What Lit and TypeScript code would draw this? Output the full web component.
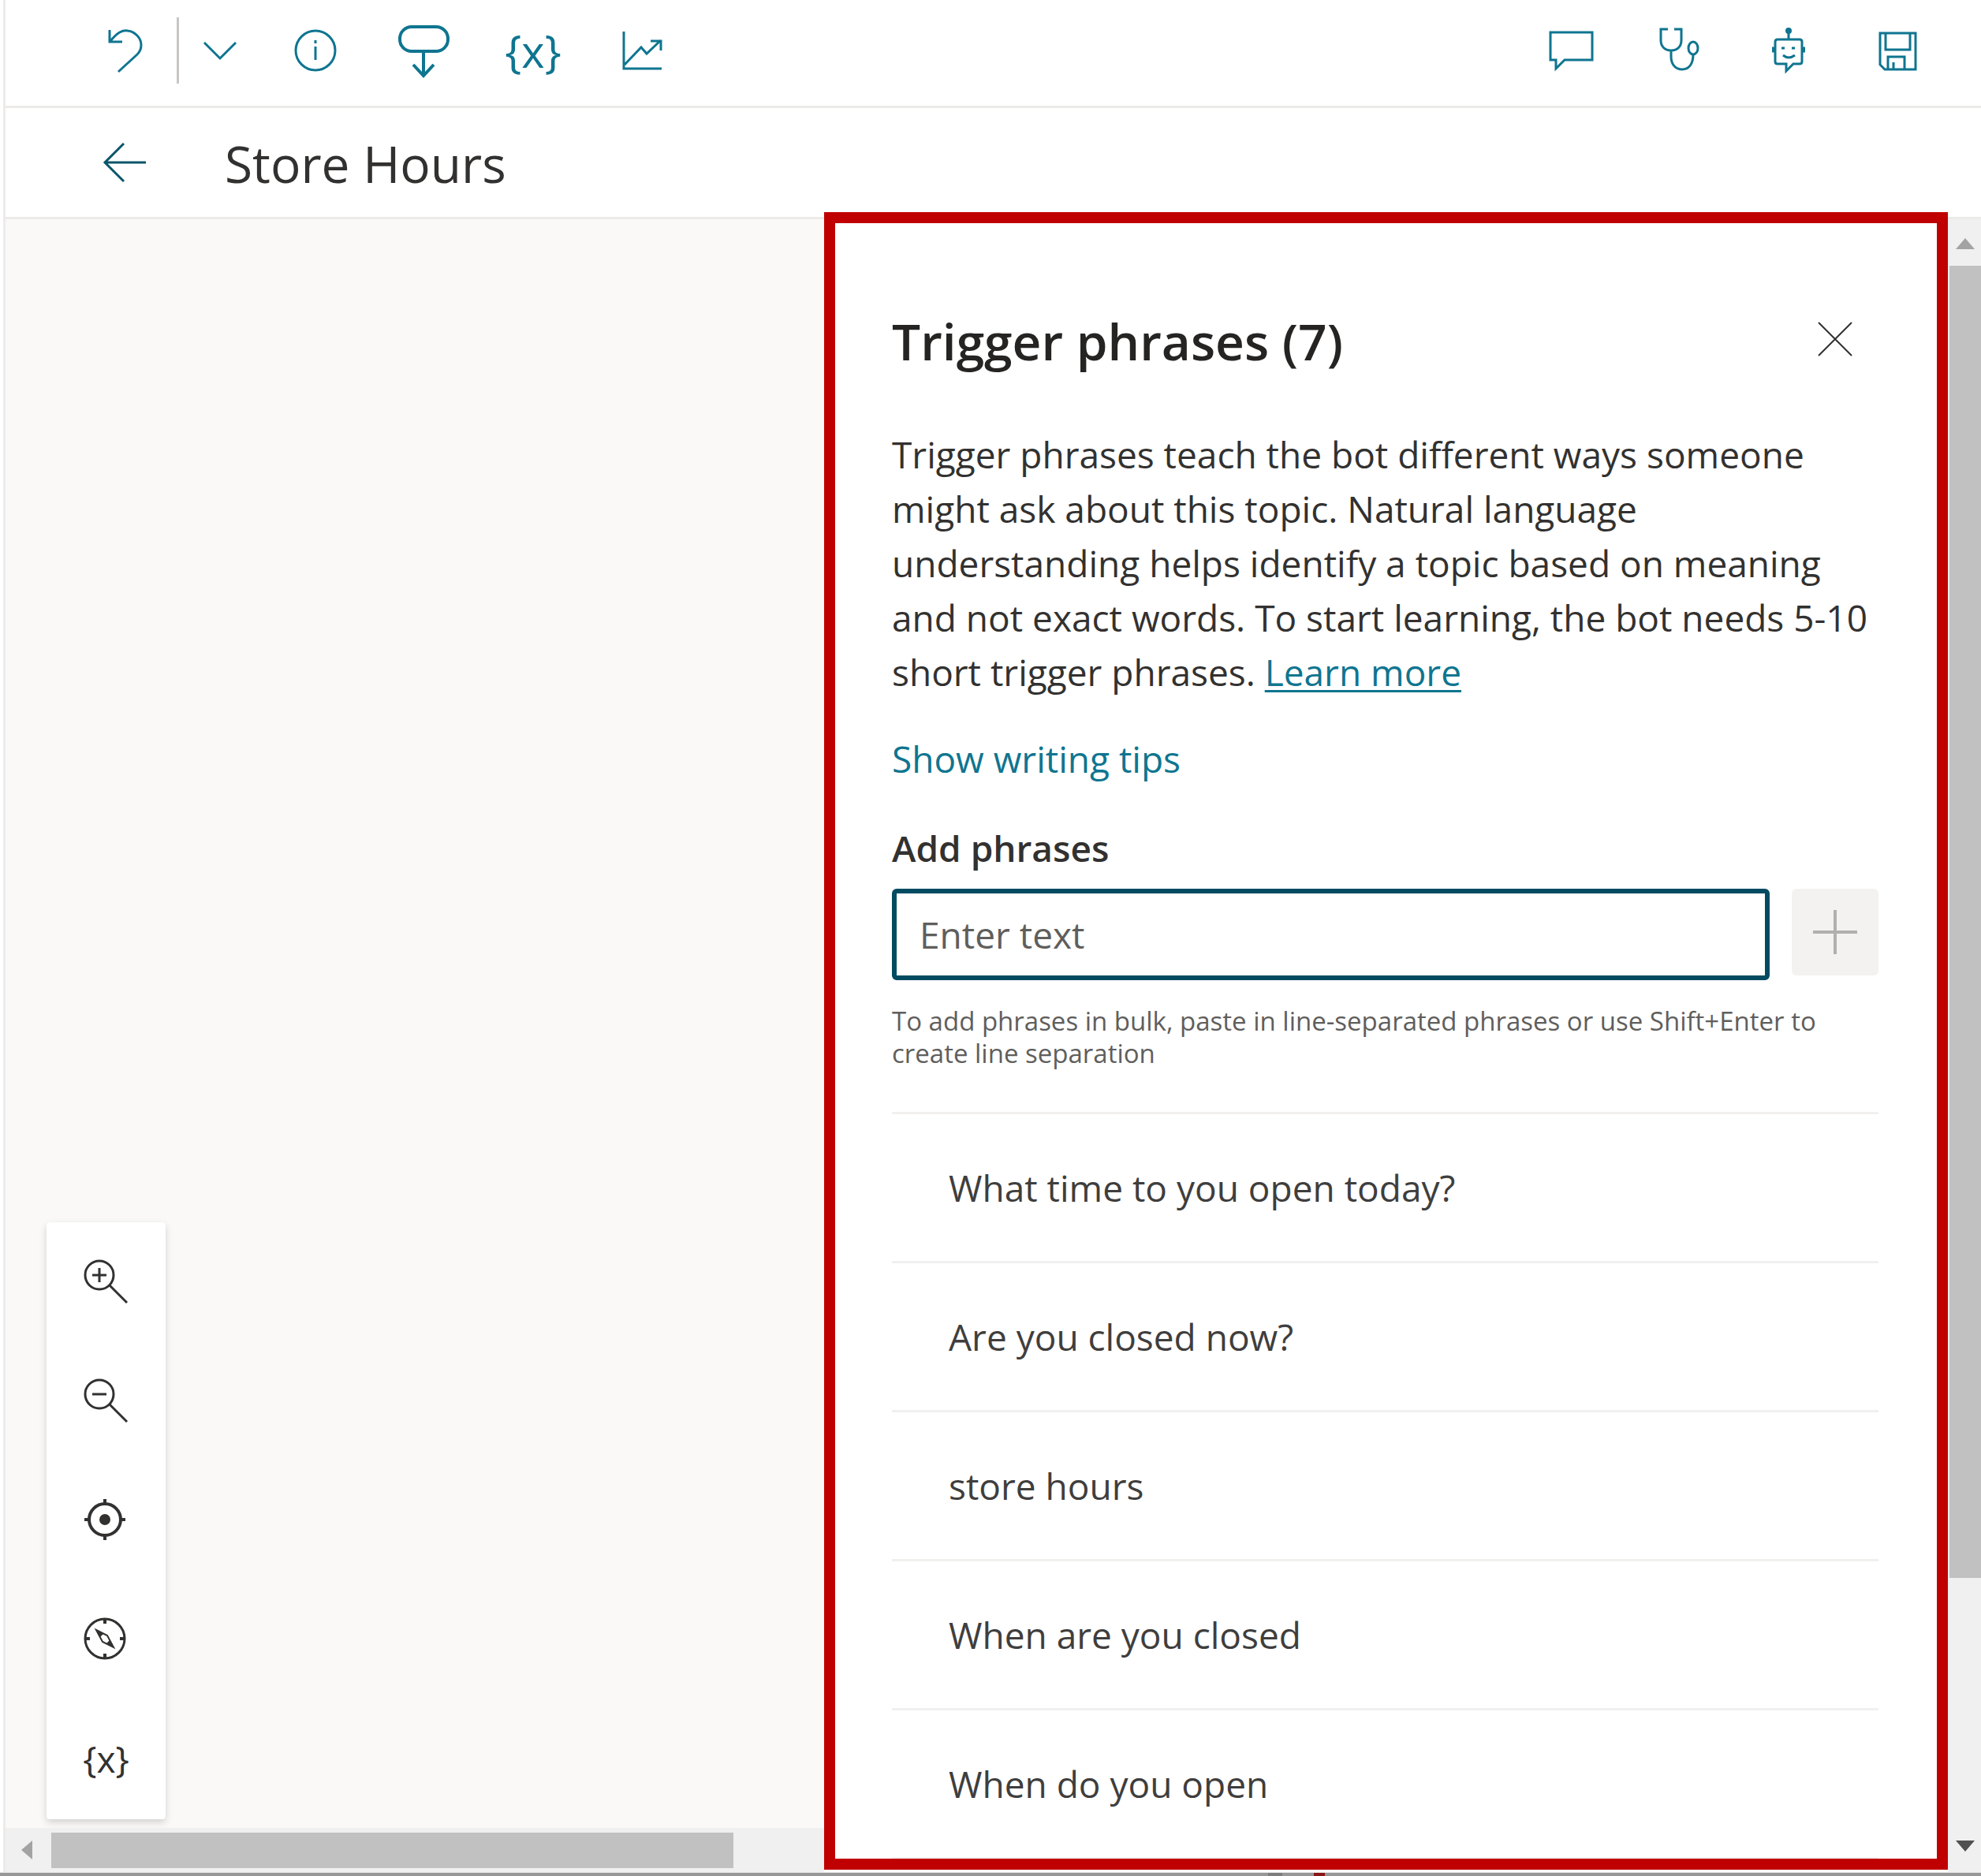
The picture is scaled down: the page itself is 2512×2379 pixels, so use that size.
import { LitElement, html, css, svg } from "lit";
import { customElement, state } from "lit/decorators.js";

const icon = (w: number, h: number, body: unknown) => html`<svg
  class="icon"
  width=${w}
  height=${h}
  viewBox="0 0 ${w} ${h}"
  fill="none"
  stroke="currentColor"
  stroke-width="3"
  aria-hidden="true"
>${body}</svg>`;

const icons = {
  undo: icon(56, 64, svg`<path d="M8 6v15h16M9 20C18 9 24 6 31 7c9 1 17 9 17 18 0 5-2 9-5 12L19 59"/>`),
  chevron: icon(44, 28, svg`<path d="M2 4l20 20L42 4"/>`),
  info: icon(56, 56, svg`<circle cx="28" cy="28" r="25"/><path d="M28 23v17"/><path d="M28 15v4"/>`),
  node: icon(68, 72, svg`<rect x="3" y="6" width="61" height="31" rx="15" stroke-width="4"/><path d="M33 37v31M20 54l13 14 13-14" stroke-width="4"/>`),
  chart: icon(52, 52, svg`<path d="M3 2v47h48M4 44l21-22 7 8 18-17M37 14h13v12"/>`),
  comment: icon(60, 60, svg`<path d="M3 7h53v35H21L10 53V42H3z"/>`),
  stetho: icon(60, 60, svg`<path d="M14 3H5v14c0 8 5 13 13 13s13-5 13-13V3h-9M18 30v8c0 10 6 16 14 16s14-6 14-19"/><ellipse cx="46" cy="27" rx="6" ry="8"/>`),
  bot: icon(60, 64, svg`<circle cx="29" cy="7" r="4" fill="currentColor" stroke="none"/><path d="M29 6v12M15 18h28q3 0 3 3v25q0 3-3 3H35L26 58v-9H15q-3 0-3-3V21q0-3 3-3zM22 38q7 6 15 0M20 29h4M33 29h4"/><path d="M8 31h4M46 31h4" stroke-width="7"/>`),
  save: icon(52, 54, svg`<path d="M3 5h45v46H9L3 45zM10 5v21h31V5M13 51V35h21v16M20 42v9"/>`),
  back: icon(60, 56, svg`<path d="M3 28h53M28 4L4 28l24 24"/>`),
  close: icon(48, 48, svg`<path d="M3 3l42 42M45 3L3 45" stroke-width="2"/>`),
  plus: icon(56, 56, svg`<path d="M0 28h56M28 0v56" stroke-width="4"/>`),
  zoomIn: icon(60, 60, svg`<circle cx="21" cy="21" r="18"/><path d="M34 34l22 22M12 21h18M21 12v18"/>`),
  zoomOut: icon(60, 60, svg`<circle cx="21" cy="21" r="18"/><path d="M34 34l22 22M12 21h18"/>`),
  target: icon(60, 60, svg`<circle cx="28" cy="29" r="20" stroke-width="4"/><circle cx="28" cy="29" r="7" fill="currentColor" stroke="none"/><path d="M28 3v7M28 48v7M2 29h7M47 29h7" stroke-width="4"/>`),
  compass: icon(60, 60, svg`<circle cx="28" cy="29" r="25"/><path d="M28 4v6M28 48v6M3 29h6M47 29h6" stroke-width="4"/><path d="M17 18l14 7 8 15-14-7z" stroke-width="2"/><path d="M17 18l9 5-4 4zM39 40l-9-5 4-4z" fill="currentColor" stroke="none"/>`),
};

@customElement("app-root")
export class AppRoot extends LitElement {
  @state() private phrases = [
    "What time to you open today?",
    "Are you closed now?",
    "store hours",
    "When are you closed",
    "When do you open",
  ];

  static styles = css`
    :host { display: block; font-family: "Open Sans", "Noto Sans", sans-serif; color: #323130; }
    * { box-sizing: border-box; }
    button { border: 0; margin: 0; padding: 0; background: none; font: inherit; color: inherit; display: flex; align-items: center; justify-content: center; }
    .icon { display: block; flex: none; }
    .window { display: flex; flex-direction: column; height: 100vh; min-height: 2200px; background: #fff; overflow: hidden; }
    .page { flex: 1; min-height: 0; display: flex; flex-direction: column; margin-left: 4px; border-left: 3px solid #edebe9; }
    .toolbar { display: flex; align-items: center; justify-content: space-between; height: 137px; padding: 0 36px 6px 120px; border-bottom: 3px solid #edebe9; color: #0f7590; flex: none; }
    .group { display: flex; align-items: center; }
    .tool { width: 138px; height: 80px; }
    .undo { width: 64px; }
    .split { width: 3px; height: 84px; margin: 0 0 0 33px; background: #c8c6c4; }
    .more { width: 104px; }
    .braces { font-size: 56px; line-height: 80px; }
    .titlebar { display: flex; align-items: center; gap: 96px; height: 141px; padding: 0 0 0 122px; border-bottom: 3px solid #edebe9; flex: none; }
    .back { color: #0b556a; }
    .title { margin: 0; padding-top: 4px; font-weight: 400; font-size: 64px; line-height: 88px; }
    .main { flex: 1; min-height: 0; display: grid; grid-template-columns: minmax(0, 1038fr) minmax(0, 1425fr) 42px; }
    .canvas { display: flex; flex-direction: column; min-height: 0; background: #faf9f8; }
    .stage { flex: 1; display: flex; align-items: flex-end; padding: 0 0 11px 52px; }
    .zoombar { width: 151px; padding-bottom: 2px; background: #fff; border-radius: 4px; box-shadow: 0 4px 10px rgba(0, 0, 0, .16); }
    .zoombar button { width: 151px; height: 151px; }
    .small { font-size: 46px; }
    .hscroll { display: flex; align-items: center; height: 56px; padding-left: 20px; background: #f0f0f0; }
    .hthumb { width: 85%; height: 45px; margin-left: 24px; background: #c1c1c1; }
    .vscroll { display: flex; flex-direction: column; align-items: center; background: #f0f0f0; padding: 24px 0 26px 2px; }
    .vtrack { flex: 1; width: 40px; margin-top: 21px; display: flex; flex-direction: column; }
    .vthumb { flex: 5; background: #c1c1c1; }
    .vrest { flex: 1; }
    .panel { display: flex; flex-direction: column; margin: -9px 0 3px; padding: 106px 74px 0 72px; border: 14px solid #c00000; background: #fff; overflow: hidden; }
    .head { display: flex; justify-content: space-between; align-items: flex-start; padding-right: 31px; }
    .close { height: 82px; }
    .heading { margin: 0; font-weight: 600; font-size: 64px; line-height: 88px; color: #252423; }
    .text { margin: 65px 0 0; font-size: 46px; line-height: 69px; }
    .link { display: inline-block; color: #0f7590; text-decoration: underline; text-decoration-thickness: 3px; text-underline-offset: 5px; }
    .tips { align-self: flex-start; margin-top: 41px; font-size: 46px; line-height: 69px; color: #0f7590; }
    .label { margin-top: 44px; font-size: 46px; line-height: 69px; font-weight: 600; }
    .entry { display: flex; align-items: flex-start; gap: 28px; margin-top: 17px; }
    .field { flex: 1; min-width: 0; height: 116px; padding: 0 29px; border: 6px solid #004b61; border-radius: 6px; font: inherit; font-size: 46px; color: #323130; outline: none; background: #fff; }
    .field::placeholder { color: #605e5c; opacity: 1; }
    .add { width: 110px; height: 110px; border-radius: 6px; background: #f3f2f1; color: #b1b0ae; }
    .hint { margin: 31px 0 0; font-size: 33px; line-height: 41px; color: #605e5c; }
    .list { margin: 54px 0 0; padding: 0; list-style: none; border-bottom: 3px solid #f1f0ef; color: #3f3e3d; }
    .item { display: flex; align-items: center; height: 189px; padding-left: 72px; border-top: 3px solid #f1f0ef; font-size: 46px; line-height: 69px; }
    .edge { flex: none; display: flex; gap: 40px; height: 5px; padding-left: 64%; border-top: 1px solid #e6e6e6; background: #979797; }
    .mark { width: 18px; height: 4px; background: #7d7d7d; }
    .mark.red { width: 14px; background: #8c1515; }
  `;

  render() {
    return html`
      <div class="window">
        <div class="page">
          <header class="toolbar">
            <div class="group">
              <button class="undo" aria-label="Undo">${icons.undo}</button>
              <span class="split"></span>
              <button class="more" aria-label="Undo options">${icons.chevron}</button>
              <button class="tool" aria-label="Details">${icons.info}</button>
              <button class="tool" aria-label="Trigger">${icons.node}</button>
              <button class="tool braces" aria-label="Variables">{x}</button>
              <button class="tool" aria-label="Analytics">${icons.chart}</button>
            </div>
            <div class="group">
              <button class="tool" aria-label="Comments">${icons.comment}</button>
              <button class="tool" aria-label="Topic checker">${icons.stetho}</button>
              <button class="tool" aria-label="Test bot">${icons.bot}</button>
              <button class="tool" aria-label="Save">${icons.save}</button>
            </div>
          </header>
          <div class="titlebar">
            <button class="back" aria-label="Back">${icons.back}</button>
            <h1 class="title">Store Hours</h1>
          </div>
          <main class="main">
            <section class="canvas">
              <div class="stage">
                <div class="zoombar">
                  <button aria-label="Zoom in">${icons.zoomIn}</button>
                  <button aria-label="Zoom out">${icons.zoomOut}</button>
                  <button aria-label="Reset view">${icons.target}</button>
                  <button aria-label="Minimap">${icons.compass}</button>
                  <button class="small" aria-label="Variables">{x}</button>
                </div>
              </div>
              <div class="hscroll">
                <svg class="icon" width="14" height="24" viewBox="0 0 14 24" aria-hidden="true"><path d="M14 0v24L0 12z" fill="#a3a3a3"/></svg>
                <div class="hthumb"></div>
              </div>
            </section>
            <aside class="panel">
              <div class="head">
                <h2 class="heading">Trigger phrases (${this.phrases.length + 2})</h2>
                <button class="close" aria-label="Close">${icons.close}</button>
              </div>
              <p class="text">
                Trigger phrases teach the bot different ways someone might ask about this topic. Natural language
                understanding helps identify a topic based on meaning and not exact words. To start learning, the bot
                needs 5-10 short trigger phrases. <a class="link" href="#learn">Learn more</a>
              </p>
              <button class="tips">Show writing tips</button>
              <label class="label" for="phrase">Add phrases</label>
              <div class="entry">
                <input class="field" id="phrase" type="text" placeholder="Enter text" />
                <button class="add" aria-label="Add" disabled>${icons.plus}</button>
              </div>
              <p class="hint">To add phrases in bulk, paste in line-separated phrases or use Shift+Enter to create line separation</p>
              <ul class="list">
                ${this.phrases.map((p) => html`<li class="item">${p}</li>`)}
              </ul>
            </aside>
            <div class="vscroll">
              <svg class="icon" width="24" height="14" viewBox="0 0 24 14" aria-hidden="true"><path d="M0 14h24L12 0z" fill="#a3a3a3"/></svg>
              <div class="vtrack">
                <div class="vthumb"></div>
                <div class="vrest"></div>
              </div>
              <svg class="icon" width="24" height="14" viewBox="0 0 24 14" aria-hidden="true"><path d="M0 0h24L12 14z" fill="#505050"/></svg>
            </div>
          </main>
        </div>
        <div class="edge">
          <span class="mark"></span>
          <span class="mark red"></span>
        </div>
      </div>
    `;
  }
}
